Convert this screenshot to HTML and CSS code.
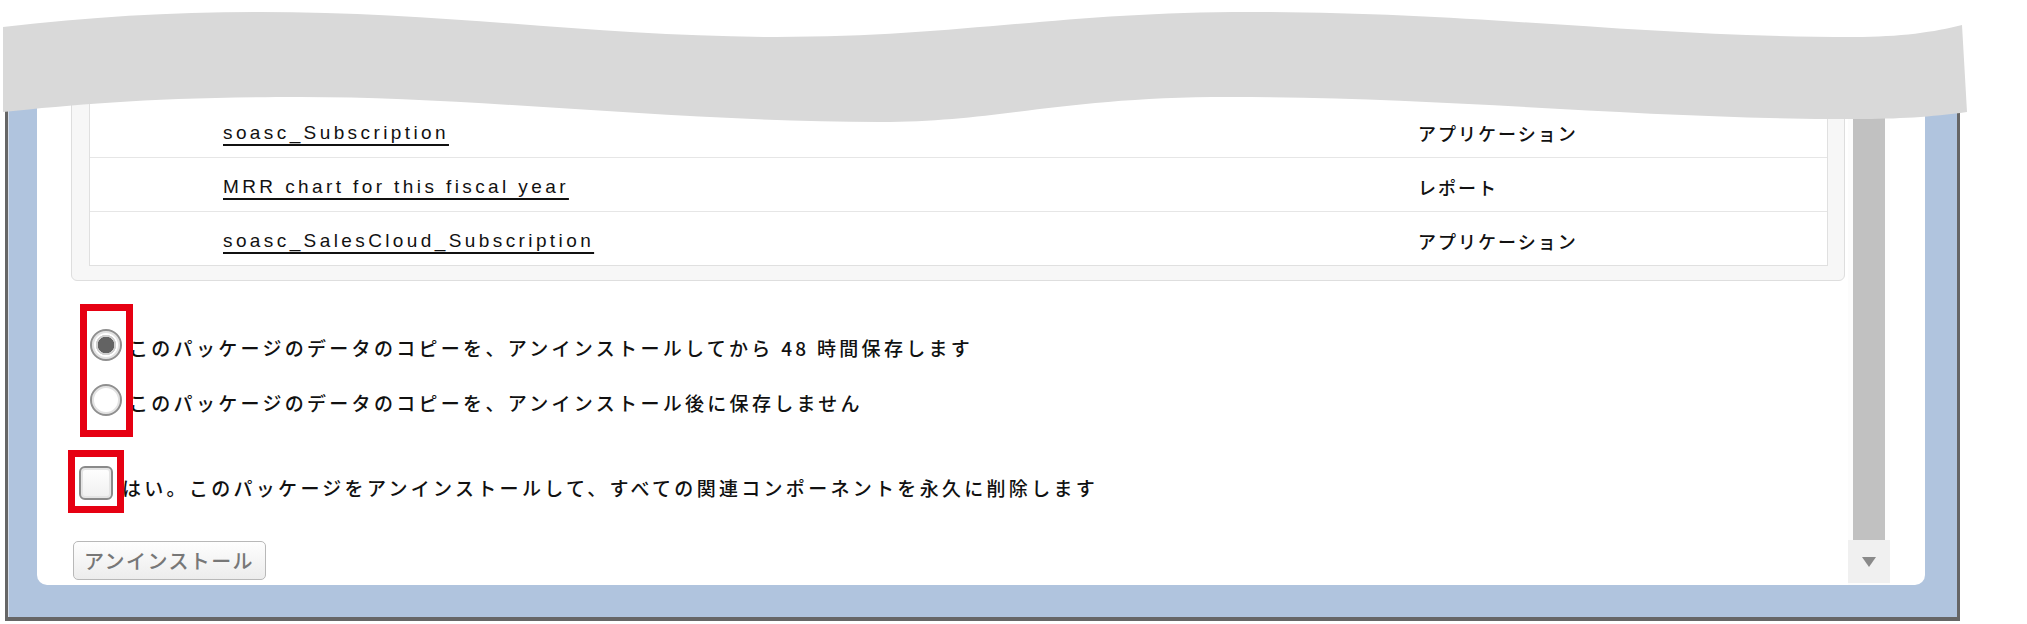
FILE: index.html
```html
<!DOCTYPE html>
<html lang="ja">
<head>
<meta charset="utf-8">
<title>パッケージのアンインストール</title>
<link rel="stylesheet" href="styles.css">
</head>
<body>
    <div class="window">
        <div class="window-body">
            <div class="content">
                <div class="comp-panel">
                    <ul class="comp-list">
                        <li><a href="javascript:;">soasc_Subscription</a><span>アプリケーション</span></li>
                        <li><a href="javascript:;">MRR chart for this fiscal year</a><span>レポート</span></li>
                        <li><a href="javascript:;">soasc_SalesCloud_Subscription</a><span>アプリケーション</span></li>
                    </ul>
                </div>

                <div class="options">
                    <label class="opt"><input type="radio" name="keep" checked>このパッケージのデータのコピーを、アンインストールしてから 48 時間保存します</label>
                    <label class="opt"><input type="radio" name="keep">このパッケージのデータのコピーを、アンインストール後に保存しません</label>
                    <div class="mark mark-radio"></div>
                </div>

                <div class="confirm">
                    <label class="opt"><input type="checkbox">はい。このパッケージをアンインストールして、すべての関連コンポーネントを永久に削除します</label>
                    <div class="mark mark-check"></div>
                </div>

                <button class="btn" disabled>アンインストール</button>
            </div>
            <div class="scrollbar">
                <div class="thumb"></div>
                <div class="arrow"></div>
            </div>
        </div>
    </div>

    <!-- 切り取り線 -->
    <svg class="tear" width="1970" height="130" viewBox="0 0 1970 130">
        <path fill="#d9d9d9" d="M3,27 C90,17 170,12 259,12 C450,12 600,37 776,37 C960,37 1060,12 1250,12 C1480,12 1640,37 1854,37 C1900,37 1935,32 1962,25 L1967,112 C1930,117 1900,119 1854,119 C1640,119 1450,97 1230,97 C1060,97 1000,122 880,122 C680,122 480,97 300,97 C160,97 80,104 3,112 Z"/>
    </svg>
</body>
</html>
```

FILE: styles.css
```css
*{ margin: 0; padding: 0; list-style: none; box-sizing: border-box;}
body{ background: #fff; color: #111; font-family: "Noto Sans CJK JP", sans-serif;}

.window{ width: 1955px; height: 576px; margin: 45px 0 0 5px; padding: 20px 32px 32px 29px; background: #b0c4de; border: 3px solid #666; border-bottom-width: 4px; box-shadow: inset 1px 0 0 #d6deea;}
.window-body{ display: flex; height: 100%; padding-right: 35px; background: #fff; border-radius: 0 0 10px 10px; overflow: hidden;}

.content{ flex: 1; padding: 6px 3px 0 34px;}

.comp-panel{ padding: 10px 16px 14px 17px; background: #f7f7f7; border: 1px solid #dedede; border-radius: 0 0 6px 6px;}
.comp-list{ padding-top: 18px; background: #fff; border: 1px solid #e0e0e0;}
.comp-list li{ display: grid; grid-template-columns: 1195px 1fr; align-items: center; height: 54px; padding: 5px 0 0 133px; border-bottom: 1px solid #e6e6e6;}
.comp-list li:last-child{ height: 53px; border-bottom: 0;}
.comp-list a{ justify-self: start; color: #111; font-family: "Liberation Sans", sans-serif; font-size: 19px; letter-spacing: 3.4px; text-decoration: underline; text-decoration-thickness: 2px; text-underline-offset: 5px;}
.comp-list span{ font-size: 18px; font-weight: 500; letter-spacing: 2px;}

.options{ position: relative; margin: 39px 0 0 19px;}
.confirm{ position: relative; margin: 30px 0 0 8px;}
.opt{ display: flex; align-items: center; height: 55px; font-size: 19px; font-weight: 500; letter-spacing: 3.3px; white-space: nowrap;}

.opt input{ flex: none; appearance: none; -webkit-appearance: none; margin: 0 7px 6px 0; background: #fff;}
.opt input[type=radio]{ width: 32px; height: 32px; border: 2px solid #8f8f8f; border-radius: 50%; box-shadow: inset 0 0 0 2px #e2e2e2;}
.opt input[type=radio]:checked{ background: radial-gradient(circle, #636363 0 8px, #cfcfcf 8.5px 10px, #fff 10.5px);}
.opt input[type=checkbox]{ width: 34px; height: 34px; margin: 0 9px 9px 0; border: 2px solid #8a8a8a; border-radius: 6px; box-shadow: inset 0 0 0 2px #e4e4e4; background: linear-gradient(#fff, #f0f0f0);}

/* 赤枠 */
.mark{ position: absolute; border: 7px solid #e60012;}
.mark-radio{ left: -10px; top: -16px; width: 53px; height: 133px;}
.mark-check{ left: -11px; top: -10px; width: 56px; height: 63px;}

.btn{ display: block; height: 39px; margin: 26px 0 0 2px; padding: 0 11px 0 10px; color: #777; font-family: "Noto Sans CJK JP", sans-serif; font-size: 20px; font-weight: 500; letter-spacing: 1.4px; background: linear-gradient(#fefefe, #ececec); border: 1px solid #b8b8b8; border-radius: 5px;}

.scrollbar{ display: flex; flex-direction: column; align-items: center; width: 42px; padding-bottom: 2px; background: #fcfcfc;}
.scrollbar .thumb{ flex: 1; width: 32px; background: #c1c1c1;}
.scrollbar .arrow{ display: flex; align-items: center; justify-content: center; width: 42px; height: 43px; background: #f0f0f0;}
.scrollbar .arrow:before{ content: ""; border-left: 7px solid transparent; border-right: 7px solid transparent; border-top: 10px solid #8a8a8a;}

.tear{ position: absolute; top: 0; left: 0;}
```
